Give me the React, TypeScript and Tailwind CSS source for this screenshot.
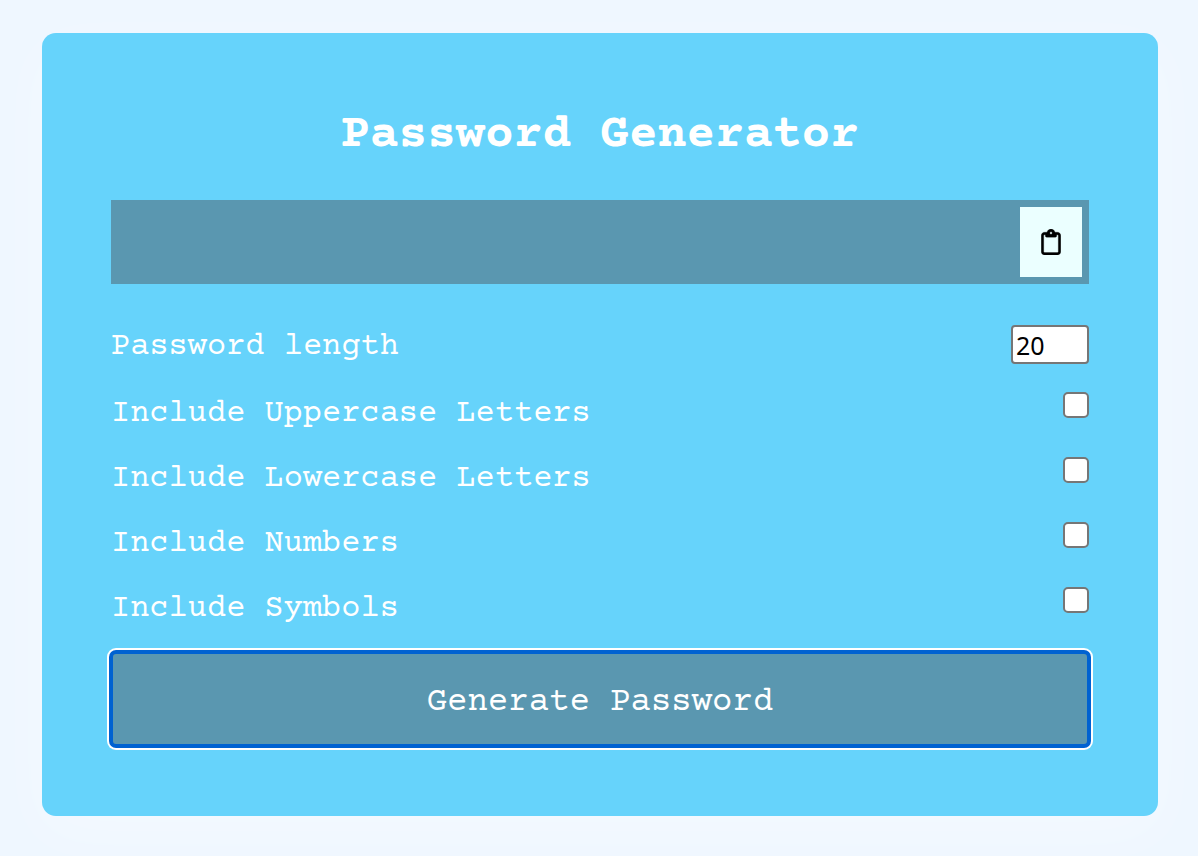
import { useState } from "react";
import { FaRegClipboard } from "react-icons/fa6";

const OPTIONS = [
  { id: "uppercase", label: "Include Uppercase Letters", chars: "ABCDEFGHIJKLMNOPQRSTUVWXYZ" },
  { id: "lowercase", label: "Include Lowercase Letters", chars: "abcdefghijklmnopqrstuvwxyz" },
  { id: "numbers", label: "Include Numbers", chars: "0123456789" },
  { id: "symbols", label: "Include Symbols", chars: "!@#$%^&*()_+-=[]{}" },
];

export default function App() {
  const [length, setLength] = useState("20");
  const [selected, setSelected] = useState<string[]>([]);
  const [password, setPassword] = useState("");

  const toggle = (id: string) =>
    setSelected((prev) => (prev.includes(id) ? prev.filter((s) => s !== id) : [...prev, id]));

  const generate = () => {
    const pool = OPTIONS.filter((o) => selected.includes(o.id)).map((o) => o.chars).join("");
    const count = pool ? Number(length) || 0 : 0;
    setPassword(Array.from({ length: count }, () => pool[Math.floor(Math.random() * pool.length)]).join(""));
  };

  return (
    <div className="min-h-screen bg-[#eff7ff] pt-[33px] pr-10 pb-10 pl-[42px] font-['Courier_Prime','Courier_10_Pitch','Liberation_Mono',monospace] text-white">
      <main className="w-full rounded-[14px] bg-[#66d3fb] px-[69px] pt-[69px] pb-[70px] shadow-[0_16px_60px_rgba(255,255,255,0.35)]">
        <h1 className="mb-8 text-center text-5xl leading-[66px] font-bold">Password Generator</h1>

        <div className="flex h-[84px] items-stretch justify-between bg-[#5a97b0] p-[7px]">
          <output className="flex min-w-0 flex-1 items-center overflow-hidden px-2 text-[32px]">{password}</output>
          <button
            type="button"
            aria-label="Copy password"
            onClick={() => navigator.clipboard?.writeText(password)}
            className="flex w-[62px] items-center justify-center bg-[#ebffff] text-black"
          >
            <FaRegClipboard className="h-[26px] w-5" stroke="currentColor" strokeWidth="6" />
          </button>
        </div>

        <div className="mt-[41px] flex flex-col gap-[21px] text-[32px] leading-11">
          <div className="flex h-[46px] items-start justify-between">
            <label htmlFor="length">Password length</label>
            <input
              id="length"
              type="number"
              min={4}
              max={20}
              value={length}
              onChange={(e) => setLength(e.target.value)}
              className="h-[39px] w-[78px] rounded-[4px] border-2 border-[#767676] bg-white px-[3px] font-['Noto_Sans',sans-serif] text-[25px] leading-8 text-black [appearance:textfield]"
            />
          </div>
          {OPTIONS.map(({ id, label }) => (
            <div key={id} className="flex items-start justify-between">
              <label htmlFor={id}>{label}</label>
              <input
                id={id}
                type="checkbox"
                checked={selected.includes(id)}
                onChange={() => toggle(id)}
                className="size-[26px] appearance-none rounded-[5px] border-2 border-[#767676] bg-white checked:bg-[#0064d0]"
              />
            </div>
          ))}
          <button
            type="button"
            onClick={generate}
            className="h-[94px] w-full rounded-[5px] border-2 border-[#0062d1] bg-[#5a97b0] pt-2 text-[34px] shadow-[0_0_0_2px_#0062d1,0_0_0_4px_#ffffff]"
          >
            Generate Password
          </button>
        </div>
      </main>
    </div>
  );
}
